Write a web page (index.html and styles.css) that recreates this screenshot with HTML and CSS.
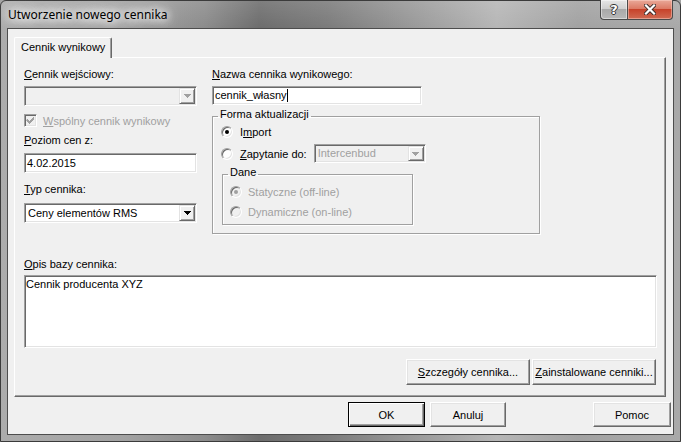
FILE: index.html
```html
<!DOCTYPE html>
<html lang="pl">
<head>
  <meta charset="UTF-8">
  <title>Utworzenie nowego cennika</title>
  <link rel="stylesheet" href="styles.css">
</head>
<body>
  <div class="window">
    <!-- title bar -->
    <div class="titlebar">
      <span class="title">Utworzenie nowego cennika</span>
      <div class="caption-buttons">
        <div class="cap help">?</div>
        <div class="cap close">
          <svg width="12" height="11" viewBox="0 0 12 11">
            <path d="M2 1.5L10 9.5M10 1.5L2 9.5" stroke="#3a2a28" stroke-width="4" stroke-linecap="square"/>
            <path d="M2 1.5L10 9.5M10 1.5L2 9.5" stroke="#fff" stroke-width="2.2" stroke-linecap="square"/>
          </svg>
        </div>
      </div>
    </div>

    <div class="client">
      <div class="tabs">
        <div class="tab">Cennik wynikowy</div>
      </div>

      <div class="panel">
        <div class="top">
          <!-- left column -->
          <div class="col">
            <div class="label"><u>C</u>ennik wejściowy:</div>
            <div class="field combo off input-in">
              <div class="combo-value"></div>
              <div class="arrow-btn">
                <svg width="7" height="4" viewBox="0 0 7 4"><path d="M0 0h7v1h-1v1h-1v1h-1v1h-1v-1h-1v-1h-1v-1h-1z" fill="#a0a0a0"/></svg>
              </div>
            </div>
            <div class="check-row">
              <div class="checkbox off">
                <svg width="9" height="9" viewBox="0 0 9 9"><path d="M1 3h1v1h1v1h1v-1h1v-1h1v-1h1v-1h1v3h-1v1h-1v1h-1v1h-1v1h-1v-1h-1v-1h-1v-1h-1z" fill="#a0a0a0"/></svg>
              </div>
              <span class="disabled-text"><u>W</u>spólny cennik wynikowy</span>
            </div>
            <div class="label label-poziom"><u>P</u>oziom cen z:</div>
            <div class="field textbox input-in">4.02.2015</div>
            <div class="label label-typ"><u>T</u>yp cennika:</div>
            <div class="field combo combo-typ">
              <div class="combo-value">Ceny elementów RMS</div>
              <div class="arrow-btn">
                <svg width="7" height="4" viewBox="0 0 7 4"><path d="M0 0h7v1h-1v1h-1v1h-1v1h-1v-1h-1v-1h-1v-1h-1z" fill="#000"/></svg>
              </div>
            </div>
          </div>

          <!-- right column -->
          <div class="col">
            <div class="label"><u>N</u>azwa cennika wynikowego:</div>
            <div class="field textbox name-input">cennik_własny<span class="caret"></span></div>

            <fieldset class="group forma">
              <legend>Forma aktualizacji</legend>
              <div class="opt">
                <span class="radio on"></span>
                <span class="opt-text">I<u>m</u>port</span>
              </div>
              <div class="opt opt-query">
                <span class="radio"></span>
                <span class="opt-text"><u>Z</u>apytanie do:</span>
                <div class="field combo off combo-query">
                  <div class="combo-value disabled-text">Intercenbud</div>
                  <div class="arrow-btn">
                    <svg width="7" height="4" viewBox="0 0 7 4"><path d="M0 0h7v1h-1v1h-1v1h-1v1h-1v-1h-1v-1h-1v-1h-1z" fill="#a0a0a0"/></svg>
                  </div>
                </div>
              </div>

              <fieldset class="group dane">
                <legend>Dane</legend>
                <div class="opt">
                  <span class="radio on off"></span>
                  <span class="opt-text disabled-text">Statyczne (off-line)</span>
                </div>
                <div class="opt opt-second">
                  <span class="radio off"></span>
                  <span class="opt-text disabled-text">Dynamiczne (on-line)</span>
                </div>
              </fieldset>
            </fieldset>
          </div>
        </div>

        <div class="label label-opis"><u>O</u>pis bazy cennika:</div>
        <div class="field memo">Cennik producenta XYZ</div>

        <div class="panel-buttons">
          <button class="btn wide"><u>S</u>zczegóły cennika...</button>
          <button class="btn wide"><u>Z</u>ainstalowane cenniki...</button>
        </div>
      </div>

      <div class="dialog-buttons">
        <button class="btn default">OK</button>
        <button class="btn cancel">Anuluj</button>
        <button class="btn help-btn">Pomoc</button>
      </div>
    </div>
  </div>
</body>
</html>
```

FILE: styles.css
```css
/* Base */
* {
  box-sizing: border-box;
}

body {
  margin: 0;
  background: #a4a4a4;
  font-family: "Liberation Sans", Arial, sans-serif;
  font-size: 11px;
  color: #000;
  overflow: hidden;
}

u {
  text-decoration: underline;
  text-underline-offset: 1px;
}

.disabled-text {
  color: #a0a0a0;
}

/* Window frame */
.window {
  width: 681px;
  height: 442px;
  border: 1px solid #3b3b3b;
  border-radius: 6px 6px 0 0;
  display: flex;
  flex-direction: column;
  background:
    linear-gradient(180deg, rgba(255, 255, 255, 0.12), rgba(255, 255, 255, 0) 27px),
    linear-gradient(90deg, #acacac 0%, #a2a2a2 18%, #8c8c8c 30%, #6d6d6d 38%, #7b7b7b 48%, #9c9c9c 62%, #b6b6b6 73%, #a2a2a2 85%, #a9a9a9 100%);
}

.titlebar {
  height: 27px;
  flex: none;
  display: flex;
  align-items: flex-start;
  padding-left: 7px;
}

.title {
  font-family: "Noto Sans", "Open Sans", sans-serif;
  font-size: 12px;
  line-height: 16px;
  margin-top: 6px;
  color: #000;
  text-shadow: 0 0 8px #fff, 0 0 10px #fff, 0 0 14px #fff, 0 0 18px #fff;
}

.caption-buttons {
  display: flex;
  margin-left: auto;
  margin-right: 7px;
  margin-top: -1px;
}

.cap {
  height: 20px;
  border: 1px solid #4a4a4a;
  border-top: none;
  display: flex;
  align-items: center;
  justify-content: center;
}

.cap.help {
  width: 27px;
  border-right: none;
  border-radius: 0 0 0 4px;
  background: linear-gradient(180deg, #e6e6e6 0%, #cfcfcf 45%, #a9a9a9 50%, #b8b8b8 100%);
  box-shadow: inset 0 0 0 1px rgba(255, 255, 255, 0.45);
  font-family: "DejaVu Sans", sans-serif;
  font-weight: bold;
  font-size: 13px;
  color: #fff;
  text-shadow: 1px 0 0 #333, -1px 0 0 #333, 0 1px 0 #333, 0 -1px 0 #333;
}

.cap.close {
  width: 46px;
  border-radius: 0 0 4px 0;
  background: linear-gradient(180deg, #e9a999 0%, #dc7b66 45%, #c7432b 50%, #d06a52 100%);
  box-shadow: inset 0 0 0 1px rgba(255, 220, 210, 0.45);
}

/* Client area */
.client {
  flex: 1;
  margin: 0 6px 6px;
  border: 1px solid #4d4d4d;
  background: #f0f0f0;
  padding: 8px 7px 0 6px;
}

.tabs {
  display: flex;
}

.tab {
  position: relative;
  z-index: 1;
  height: 21px;
  margin-bottom: -1px;
  padding: 0 6px;
  line-height: 19px;
  background: #f0f0f0;
  border: 1px solid #fff;
  border-right-color: #696969;
  border-bottom: none;
  border-radius: 2px 2px 0 0;
  box-shadow: inset -1px 0 0 #a0a0a0;
}

.panel {
  height: 340px;
  border-top: 1px solid #fff;
  border-left: 1px solid #fff;
  border-right: 1px solid #696969;
  border-bottom: 1px solid #696969;
  box-shadow: inset -1px -1px 0 #a0a0a0;
  padding: 10px 8px 0 9px;
}

.top {
  display: grid;
  grid-template-columns: 173px 328px;
  column-gap: 15px;
  align-items: start;
}

.label {
  height: 13px;
  line-height: 13px;
}

/* Sunken 3D fields */
.field {
  background: #fff;
  border: 1px solid;
  border-color: #a0a0a0 #fff #fff #a0a0a0;
  box-shadow: inset 1px 1px 0 #696969, inset -1px -1px 0 #e3e3e3;
  padding: 1px;
}

.field.off {
  background: #f0f0f0;
}

.textbox {
  height: 20px;
  line-height: 16px;
  padding-left: 2px;
  white-space: nowrap;
}

.caret {
  display: inline-block;
  width: 1px;
  height: 13px;
  background: #000;
  vertical-align: -3px;
}

.combo {
  height: 20px;
  display: flex;
}

.combo-value {
  flex: 1;
  line-height: 16px;
  padding-left: 2px;
  white-space: nowrap;
}

.arrow-btn {
  width: 16px;
  height: 16px;
  display: flex;
  align-items: center;
  justify-content: center;
  background: #f0f0f0;
  border: 1px solid;
  border-color: #e3e3e3 #696969 #696969 #e3e3e3;
  box-shadow: inset 1px 1px 0 #fff, inset -1px -1px 0 #a0a0a0;
}

.input-in {
  margin-top: 5px;
}

.check-row {
  display: flex;
  align-items: center;
  height: 13px;
  margin-top: 8px;
}

.checkbox {
  width: 13px;
  height: 13px;
  margin-right: 6px;
  background: #fff;
  border: 1px solid;
  border-color: #a0a0a0 #fff #fff #a0a0a0;
  box-shadow: inset 1px 1px 0 #696969, inset -1px -1px 0 #e3e3e3;
  display: flex;
  align-items: center;
  justify-content: center;
}

.checkbox.off {
  background: #f0f0f0;
}

.label-poziom {
  margin-top: 7px;
}

.label-poziom + .textbox {
  margin-top: 6px;
}

.label-typ {
  margin-top: 10px;
}

.combo-typ {
  margin-top: 7px;
}

.name-input {
  width: 210px;
  height: 19px;
  line-height: 15px;
  margin-top: 5px;
}

/* Group boxes */
.group {
  margin: 0;
  min-width: 0;
  border: 1px solid #a0a0a0;
  box-shadow: inset 1px 1px 0 #fff, 1px 1px 0 #fff;
}

.group legend {
  padding: 0 2px 3px;
  line-height: 13px;
}

.forma {
  width: 328px;
  margin-top: 3px;
  padding: 1px 5px 8px;
}

.dane {
  width: 191px;
  margin: 3px 0 0 4px;
  padding: 3px 5px 6px;
}

.opt {
  display: flex;
  align-items: center;
  height: 13px;
}

.opt-query {
  height: 19px;
  margin-top: 6px;
}

.opt-second {
  margin-top: 7px;
}

.radio {
  position: relative;
  width: 12px;
  height: 12px;
  margin-left: 3px;
  border-radius: 50%;
  background: #fff;
  border: 1px solid;
  border-color: #a0a0a0 #fff #fff #a0a0a0;
  box-shadow: inset 1px 1px 0 #696969, inset -1px -1px 0 #e3e3e3;
}

.radio.off {
  background: #f0f0f0;
  margin-left: 2px;
}

.radio.on::after {
  content: "";
  position: absolute;
  left: 3px;
  top: 3px;
  width: 4px;
  height: 4px;
  border-radius: 50%;
  background: #000;
}

.radio.on.off::after {
  background: #a0a0a0;
}

.opt-text {
  margin-left: 7px;
  white-space: nowrap;
}

.radio.off + .opt-text {
  margin-left: 6px;
}

.combo-query {
  width: 112px;
  height: 19px;
  margin-left: 7px;
}

.combo-query .combo-value {
  line-height: 15px;
}

.combo-query .arrow-btn {
  height: 15px;
}

/* Description */
.label-opis {
  margin-top: 24px;
}

.memo {
  height: 73px;
  margin-top: 4px;
  padding: 2px 1px;
  line-height: 13px;
}

/* Buttons */
.btn {
  font: inherit;
  color: #000;
  margin: 0;
  padding: 0;
  background: #f0f0f0;
  border: 1px solid;
  border-color: #fff #696969 #696969 #fff;
  box-shadow: inset -1px -1px 0 #a0a0a0, inset 1px 1px 0 #e3e3e3;
  text-align: center;
  white-space: nowrap;
}

.panel-buttons {
  display: flex;
  justify-content: flex-end;
  gap: 2px;
  margin-top: 11px;
  padding-right: 1px;
}

.btn.wide {
  width: 124px;
  height: 26px;
}

.dialog-buttons {
  display: flex;
  margin-top: 5px;
  margin-right: -5px;
  justify-content: flex-end;
}

.dialog-buttons .btn {
  height: 25px;
}

.btn.default {
  width: 77px;
  border-color: #000;
  box-shadow: inset 1px 1px 0 #fff, inset -1px -1px 0 #696969, inset -2px -2px 0 #a0a0a0;
}

.btn.cancel {
  width: 76px;
  margin-left: 5px;
}

.btn.help-btn {
  width: 78px;
  margin-left: 87px;
}
```
